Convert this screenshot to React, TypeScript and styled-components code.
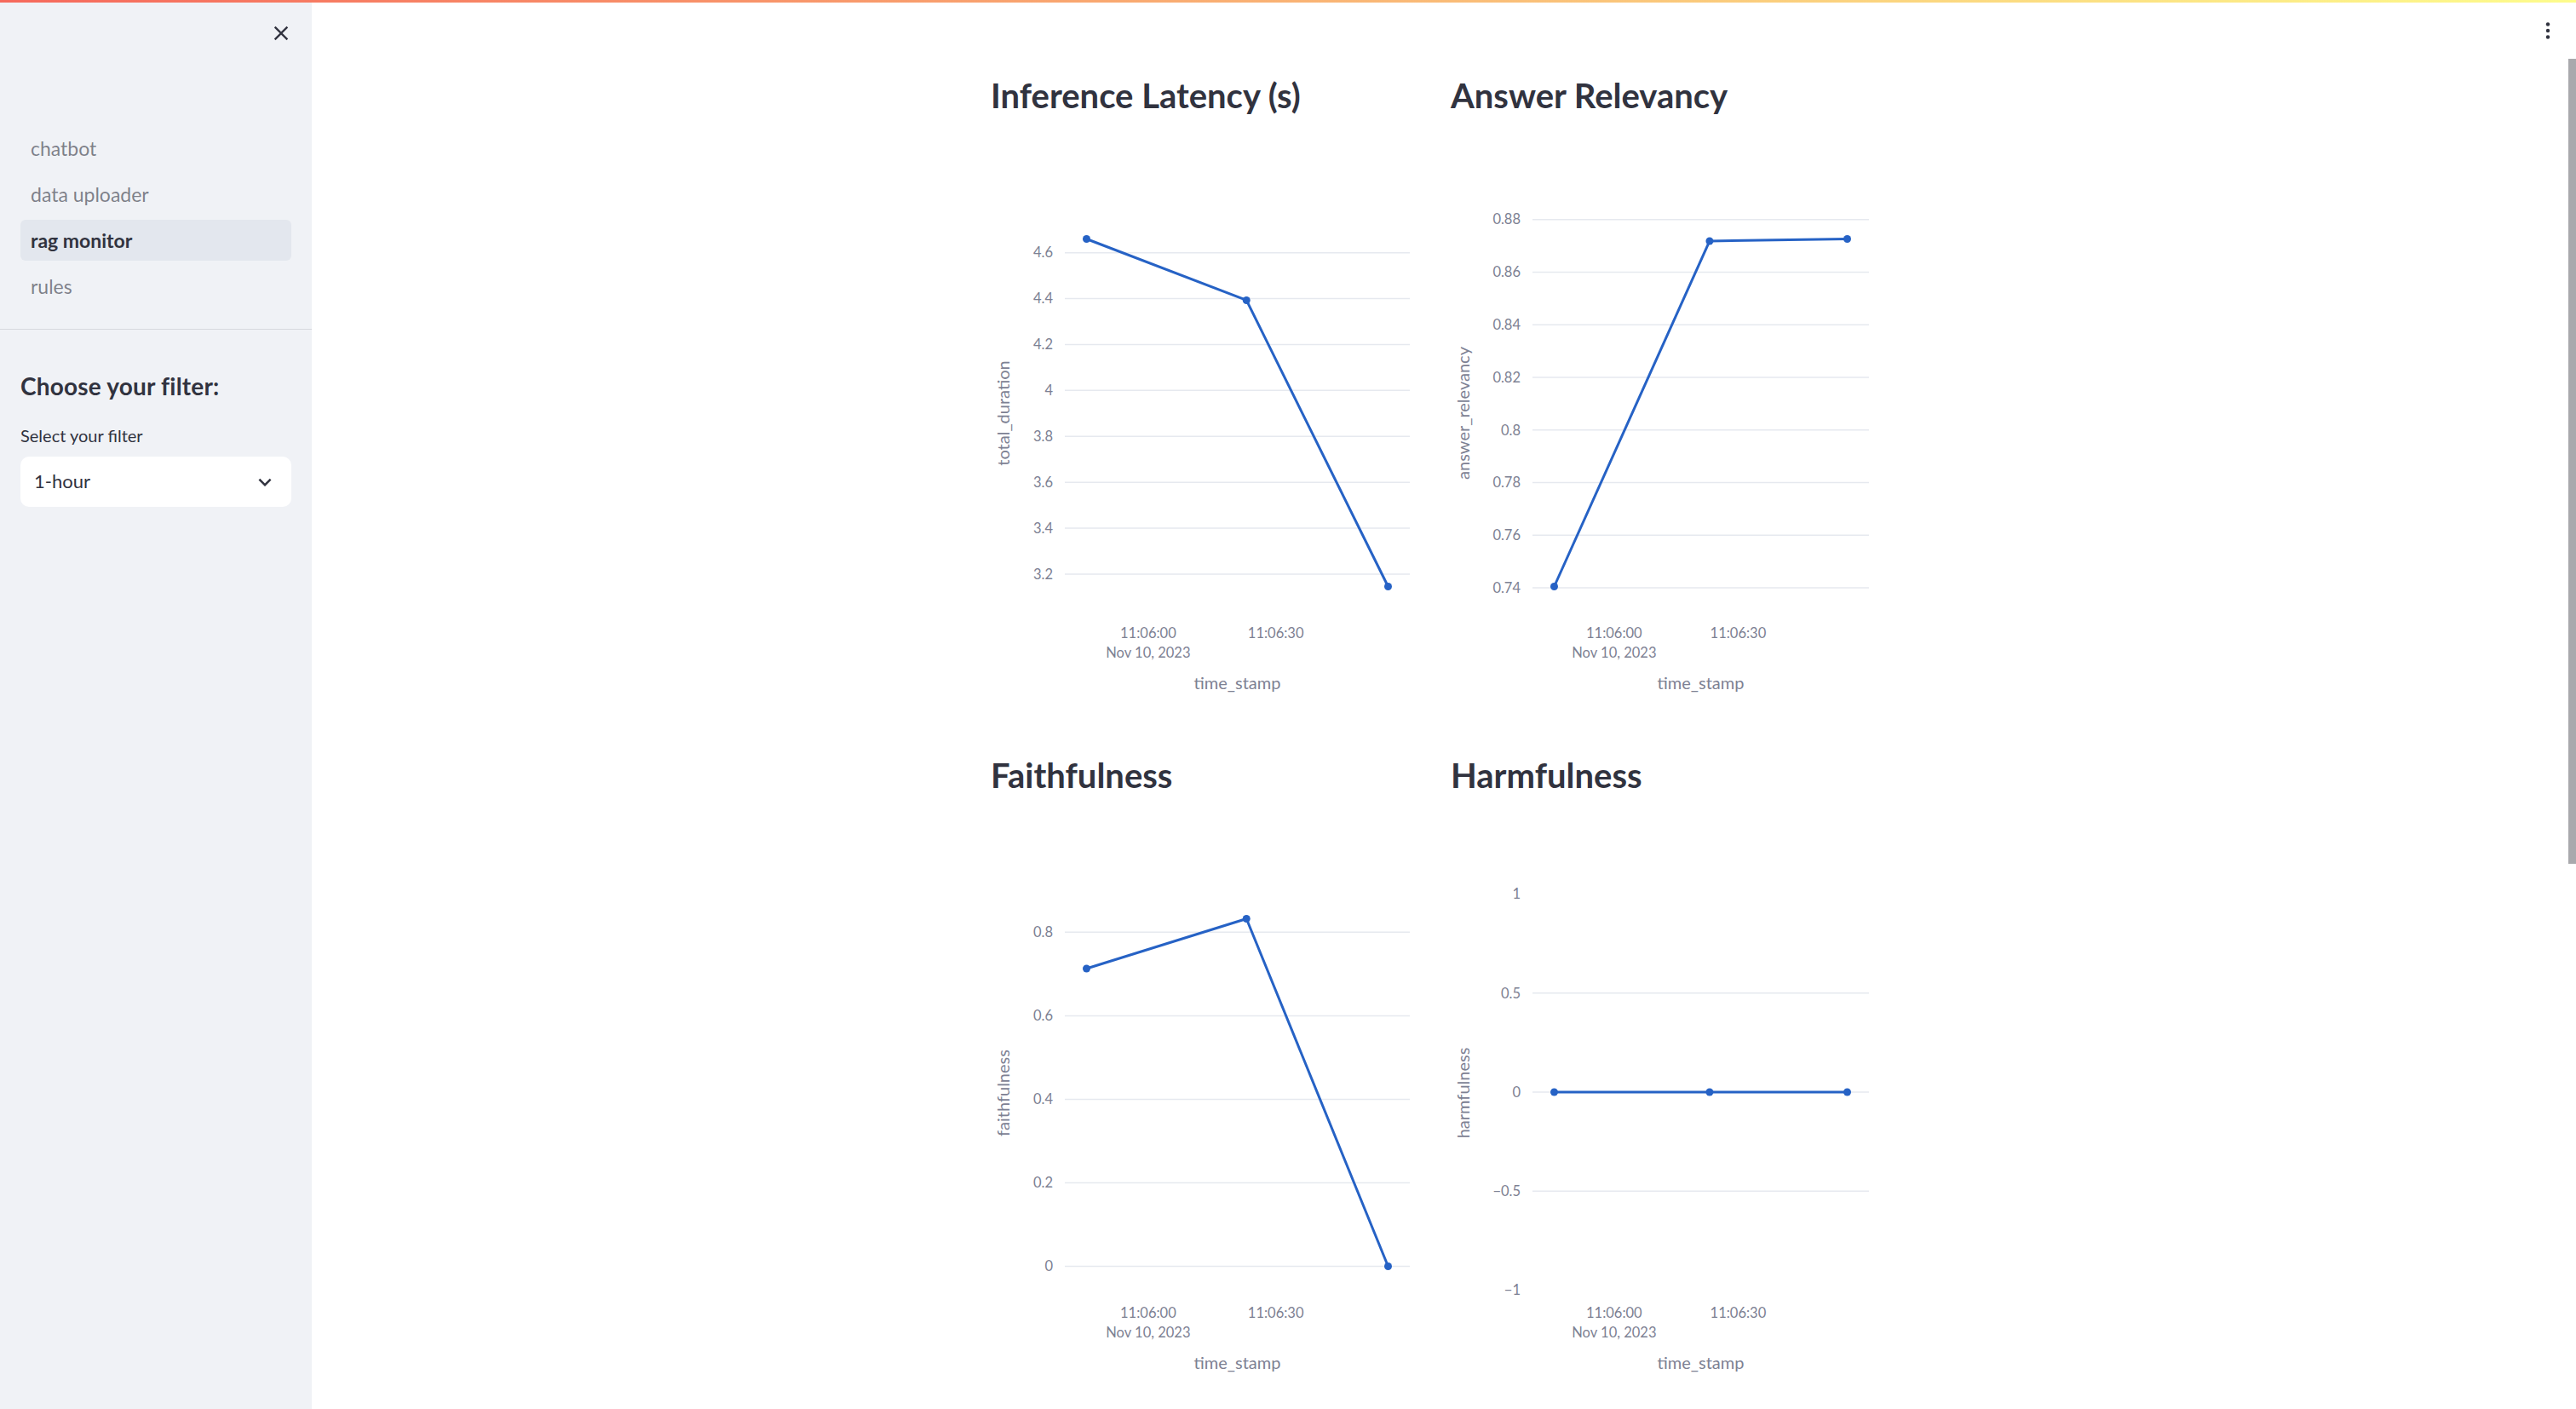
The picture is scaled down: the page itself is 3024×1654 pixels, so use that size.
import React from "react";
import styled, { createGlobalStyle } from "styled-components";

const FONT = `Lato, "Open Sans", "Noto Sans", sans-serif`;
const BLUE = "#2662c5";

const GlobalStyle = createGlobalStyle`
  *, *::before, *::after { box-sizing: border-box; }
  html, body {
    margin: 0;
    padding: 0;
    width: 3024px;
    height: 1654px;
    overflow: hidden;
    background: #ffffff;
  }
  body {
    font-family: ${FONT};
    color: #31333f;
    -webkit-font-smoothing: antialiased;
  }
  #root { width: 100%; height: 100%; }
`;

const Page = styled.div`
  width: 3024px;
  height: 1654px;
  display: flex;
  flex-direction: column;
  background: #ffffff;
  overflow: hidden;
`;

const Decoration = styled.div`
  flex: none;
  height: 3px;
  background: linear-gradient(90deg, #f6695c 0%, #fdfc8c 100%);
`;

const Body = styled.div`
  flex: 1;
  display: flex;
  min-height: 0;
`;

/* ---------- Sidebar ---------- */

const Sidebar = styled.aside`
  flex: none;
  width: 366px;
  background: #f0f2f6;
  display: flex;
  flex-direction: column;
`;

const SidebarTop = styled.div`
  height: 147px;
  display: flex;
  justify-content: flex-end;
  align-items: flex-start;
  padding: 20px 20px 0 0;
`;

const IconButton = styled.button`
  width: 32px;
  height: 32px;
  padding: 0;
  border: none;
  background: transparent;
  display: flex;
  align-items: center;
  justify-content: center;
  color: #31333f;
  cursor: pointer;
`;

const Nav = styled.nav`
  display: flex;
  flex-direction: column;
  gap: 6px;
  padding: 0 24px 26px;
  border-bottom: 1px solid #d6d8de;
`;

const NavItem = styled.a<{ $active?: boolean }>`
  height: 48px;
  display: flex;
  align-items: center;
  padding: 1px 12px 0;
  border-radius: 6px;
  font-size: 23px;
  line-height: 1.2;
  text-decoration: none;
  font-weight: ${(p) => (p.$active ? 700 : 400)};
  color: ${(p) => (p.$active ? "#31333f" : "rgba(49, 51, 63, 0.6)")};
  background: ${(p) => (p.$active ? "#e3e7ee" : "transparent")};
`;

const FilterSection = styled.section`
  padding: 50px 24px 0;
  display: flex;
  flex-direction: column;
`;

const SidebarHeading = styled.h2`
  margin: 0;
  font-size: 28px;
  line-height: 32px;
  font-weight: 700;
  color: #31333f;
  letter-spacing: 0.2px;
`;

const FieldLabel = styled.label`
  margin-top: 30px;
  font-size: 20px;
  line-height: 1.2;
  color: #31333f;
`;

const SelectBox = styled.div`
  margin-top: 13px;
  height: 59px;
  background: #ffffff;
  border-radius: 10px;
  display: flex;
  align-items: center;
  justify-content: space-between;
  padding: 0 16px;
  font-size: 22px;
  line-height: 1.2;
  color: #31333f;
`;

/* ---------- Main ---------- */

const Main = styled.main`
  flex: 1;
  min-width: 0;
  display: flex;
  flex-direction: column;
  padding-right: 8px;
  background: #ffffff;
`;

const Header = styled.header`
  flex: none;
  height: 69px;
  display: flex;
  justify-content: flex-end;
  align-items: flex-start;
  padding-top: 13px;
`;

const MenuButton = styled.button`
  width: 40px;
  height: 40px;
  margin-right: 5px;
  padding: 0;
  border: none;
  background: transparent;
  display: flex;
  align-items: center;
  justify-content: center;
  color: #31333f;
`;

const Content = styled.div`
  width: 1056px;
  margin: 0 auto;
  padding-top: 16px;
  display: grid;
  grid-template-columns: 516px 516px;
  column-gap: 24px;
  row-gap: 50px;
`;

const ChartCard = styled.section`
  display: flex;
  flex-direction: column;
`;

const ChartHeading = styled.h3`
  margin: 0;
  font-size: 40px;
  line-height: 48px;
  font-weight: 700;
  color: #31333f;
  letter-spacing: 0;
`;

const ChartSvg = styled.svg`
  display: block;
  width: 492px;
  height: 700px;
  overflow: visible;
`;

const GridLine = styled.line`
  stroke: #e6e9ef;
  stroke-width: 1.5;
`;

const TickLabel = styled.text`
  font-family: ${FONT};
  font-size: 16.5px;
  fill: #7d8193;
`;

const AxisTitle = styled.text`
  font-family: ${FONT};
  font-size: 20px;
  fill: #7d8193;
`;

const SeriesLine = styled.polyline`
  fill: none;
  stroke: ${BLUE};
  stroke-width: 3;
  stroke-linejoin: round;
  stroke-linecap: round;
`;

const SeriesPoint = styled.circle`
  fill: ${BLUE};
`;

const ScrollThumb = styled.div`
  position: fixed;
  top: 69px;
  right: 0;
  width: 9px;
  height: 945px;
  background: #a9a9ad;
`;

/* ---------- Chart data ---------- */

type Tick = { v: number; label: string; grid: boolean };

type ChartSpec = {
  title: string;
  yTitle: string;
  plotLeft: number;
  plotRight: number;
  labelRight: number;
  domain: [number, number];
  yRange: [number, number];
  ticks: Tick[];
  values: number[];
};

const TIMES = [-14.5, 23.1, 56.4];
const PAD = 25.5;

const mk = (vals: number[], labels: string[], grid: boolean[] = []): Tick[] =>
  vals.map((v, i) => ({ v, label: labels[i], grid: grid[i] ?? true }));

const CHARTS: ChartSpec[] = [
  {
    title: "Inference Latency (s)",
    yTitle: "total_duration",
    plotLeft: 87,
    plotRight: 492,
    labelRight: 73,
    domain: [3.146, 4.66],
    yRange: [552.5, 144.5],
    ticks: mk(
      [3.2, 3.4, 3.6, 3.8, 4, 4.2, 4.4, 4.6],
      ["3.2", "3.4", "3.6", "3.8", "4", "4.2", "4.4", "4.6"]
    ),
    values: [4.66, 4.393, 3.146],
  },
  {
    title: "Answer Relevancy",
    yTitle: "answer_relevancy",
    plotLeft: 96,
    plotRight: 491,
    labelRight: 82,
    domain: [0.7405, 0.8726],
    yRange: [552.5, 144.5],
    ticks: mk(
      [0.74, 0.76, 0.78, 0.8, 0.82, 0.84, 0.86, 0.88],
      ["0.74", "0.76", "0.78", "0.8", "0.82", "0.84", "0.86", "0.88"]
    ),
    values: [0.7405, 0.8718, 0.8726],
  },
  {
    title: "Faithfulness",
    yTitle: "faithfulness",
    plotLeft: 87,
    plotRight: 492,
    labelRight: 73,
    domain: [0, 0.8323],
    yRange: [552.5, 144.5],
    ticks: mk([0, 0.2, 0.4, 0.6, 0.8], ["0", "0.2", "0.4", "0.6", "0.8"]),
    values: [0.713, 0.8323, 0],
  },
  {
    title: "Harmfulness",
    yTitle: "harmfulness",
    plotLeft: 96,
    plotRight: 491,
    labelRight: 82,
    domain: [-1, 1],
    yRange: [580.5, 115.5],
    ticks: mk(
      [-1, -0.5, 0, 0.5, 1],
      ["\u22121", "\u22120.5", "0", "0.5", "1"],
      [false, true, true, true, false]
    ),
    values: [0, 0, 0],
  },
];

const Chart: React.FC<{ spec: ChartSpec }> = ({ spec }) => {
  const { plotLeft, plotRight, domain, yRange } = spec;
  const t1 = TIMES[0];
  const t3 = TIMES[2];
  const xOf = (t: number) =>
    plotLeft + PAD + ((t - t1) / (t3 - t1)) * (plotRight - plotLeft - 2 * PAD);
  const yOf = (v: number) =>
    yRange[0] + ((v - domain[0]) / (domain[1] - domain[0])) * (yRange[1] - yRange[0]);
  const pts = spec.values.map((v, i) => [xOf(TIMES[i]), yOf(v)] as const);
  const plotMidY = 349;
  const x0 = xOf(0);
  const x30 = xOf(30);
  return (
    <ChartSvg viewBox="0 0 492 700">
      {spec.ticks
        .filter((t) => t.grid)
        .map((t) => (
          <GridLine key={`g${t.v}`} x1={plotLeft} x2={plotRight} y1={yOf(t.v)} y2={yOf(t.v)} />
        ))}
      {spec.ticks.map((t) => (
        <TickLabel key={`l${t.v}`} x={spec.labelRight} y={yOf(t.v) + 5.8} textAnchor="end">
          {t.label}
        </TickLabel>
      ))}
      <AxisTitle transform={`translate(22 ${plotMidY}) rotate(-90)`} textAnchor="middle">
        {spec.yTitle}
      </AxisTitle>
      <SeriesLine points={pts.map((p) => p.join(",")).join(" ")} />
      {pts.map((p, i) => (
        <SeriesPoint key={i} cx={p[0]} cy={p[1]} r={4.5} />
      ))}
      <TickLabel x={x0} y={613.3} textAnchor="middle">
        11:06:00
      </TickLabel>
      <TickLabel x={x0} y={636.3} textAnchor="middle">
        Nov 10, 2023
      </TickLabel>
      <TickLabel x={x30} y={613.3} textAnchor="middle">
        11:06:30
      </TickLabel>
      <AxisTitle x={(plotLeft + plotRight) / 2} y={673.3} textAnchor="middle">
        time_stamp
      </AxisTitle>
    </ChartSvg>
  );
};

const CloseIcon = () => (
  <svg width="28" height="28" viewBox="0 0 24 24" fill="currentColor" aria-hidden>
    <path d="M19 6.41 17.59 5 12 10.59 6.41 5 5 6.41 10.59 12 5 17.59 6.41 19 12 13.41 17.59 19 19 17.59 13.41 12z" />
  </svg>
);

const ChevronIcon = () => (
  <svg width="30" height="30" viewBox="0 0 24 24" fill="#31333f" aria-hidden>
    <path d="M16.59 8.59 12 13.17 7.41 8.59 6 10l6 6 6-6z" />
  </svg>
);

const KebabIcon = () => (
  <svg width="40" height="40" viewBox="0 0 40 40" fill="currentColor" aria-hidden>
    <circle cx="20" cy="12.5" r="2.2" />
    <circle cx="20" cy="20" r="2.2" />
    <circle cx="20" cy="27.5" r="2.2" />
  </svg>
);

const NAV = ["chatbot", "data uploader", "rag monitor", "rules"];

export default function App() {
  return (
    <>
      <GlobalStyle />
      <Page>
        <Decoration />
        <Body>
          <Sidebar>
            <SidebarTop>
              <IconButton aria-label="Close sidebar">
                <CloseIcon />
              </IconButton>
            </SidebarTop>
            <Nav>
              {NAV.map((n) => (
                <NavItem key={n} $active={n === "rag monitor"}>
                  {n}
                </NavItem>
              ))}
            </Nav>
            <FilterSection>
              <SidebarHeading>Choose your filter:</SidebarHeading>
              <FieldLabel>Select your filter</FieldLabel>
              <SelectBox>
                <span>1-hour</span>
                <ChevronIcon />
              </SelectBox>
            </FilterSection>
          </Sidebar>
          <Main>
            <Header>
              <MenuButton aria-label="Main menu">
                <KebabIcon />
              </MenuButton>
            </Header>
            <Content>
              {CHARTS.map((c) => (
                <ChartCard key={c.title}>
                  <ChartHeading>{c.title}</ChartHeading>
                  <Chart spec={c} />
                </ChartCard>
              ))}
            </Content>
          </Main>
        </Body>
      </Page>
      <ScrollThumb />
    </>
  );
}
